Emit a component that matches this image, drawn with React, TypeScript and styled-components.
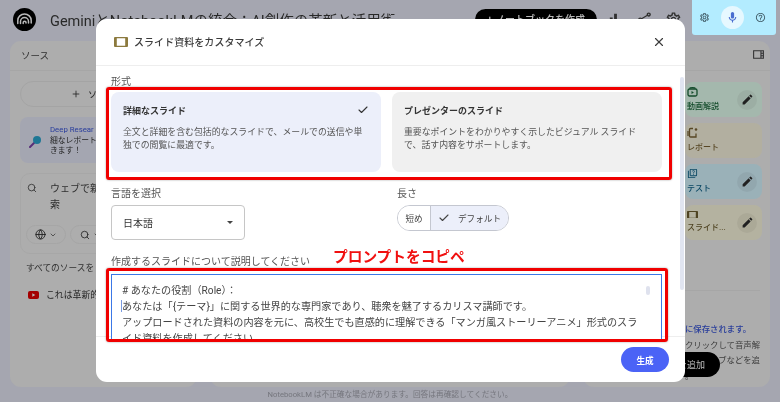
import styled, { createGlobalStyle } from 'styled-components'
import { Check, ChevronDown, Globe, Plus, Search, X } from 'lucide-react'
import {
  MdEdit,
  MdOutlineHelpOutline,
  MdOutlineMic,
  MdOutlineQuiz,
  MdOutlineSettings,
  MdOutlineViewSidebar,
  MdOutlineShare,
  MdOutlineBarChart,
} from 'react-icons/md'

const Global = createGlobalStyle`
  html, body {
    margin: 0;
    padding: 0;
    background: #e5e7f4;
    font-family: Roboto, "Noto Sans CJK JP", sans-serif;
  }
`

const Page = styled.div`
  position: relative;
  width: 780px;
  height: 402px;
  overflow: hidden;
  background: #e5e7f4;
  color: #333;
  filter: blur(0.45px);
`

const TopBar = styled.header`
  height: 41px;
  display: flex;
  align-items: center;
  padding: 0 10px 2px 13px;
  box-sizing: border-box;
`

const DocTitle = styled.div`
  margin-left: 14px;
  font-size: 14.5px;
  color: #3a3a3a;
  white-space: nowrap;
  flex: 1;
`

const BlackPill = styled.div`
  width: 122px;
  height: 21px;
  border-radius: 11px;
  background: #000;
  color: #fff;
  font-size: 10px;
  font-weight: 500;
  line-height: 22px;
  text-align: center;
`

const TopIcons = styled.div`
  display: flex;
  align-items: center;
  gap: 12px;
  margin-left: 10px;
  margin-right: 88px;
  color: #444;
  font-size: 17px;
`

const Columns = styled.main`
  height: 346px;
  padding: 0 10px;
  display: grid;
  grid-template-columns: 187px 360px 187px;
  column-gap: 13px;
`

const Panel = styled.section`
  background: #f0f0f0;
  border-radius: 11px;
  overflow: hidden;
`

const PanelHead = styled.div<{ $right?: boolean }>`
  height: 30px;
  box-sizing: border-box;
  border-bottom: 1px solid #e6e6e6;
  display: flex;
  align-items: center;
  justify-content: ${p => (p.$right ? 'flex-end' : 'flex-start')};
  padding: 0 ${p => (p.$right ? '5px' : '11px')} 2px;
  font-size: 9.5px;
  color: #444;
`

const LeftBody = styled.div`
  padding: 10px 10px;
  display: flex;
  flex-direction: column;
`

const AddButton = styled.div`
  height: 26px;
  box-sizing: border-box;
  border: 1px solid #e4e4e4;
  border-radius: 13px;
  display: flex;
  align-items: center;
  padding-left: 50px;
  gap: 7px;
  font-size: 9px;
  color: #333;
`

const ResearchCard = styled.div`
  margin-top: 10px;
  height: 46px;
  border-radius: 8px;
  background: #e4e7f6;
  display: flex;
  align-items: center;
  padding: 2px 0 0 9px;
  box-sizing: border-box;
  gap: 8px;
  font-size: 7.8px;
  line-height: 10.5px;
  color: #333;
  white-space: nowrap;
`

const ResearchLink = styled.span`
  color: #3a55d8;
`

const SearchBox = styled.div`
  margin-top: 10px;
  height: 81px;
  box-sizing: border-box;
  border: 1px solid #e8e8e8;
  border-radius: 10px;
  padding: 7px 5px;
`

const SearchRow = styled.div`
  display: flex;
  gap: 13px;
  padding-left: 1px;
  font-size: 10px;
  line-height: 16px;
  color: #444;
  margin-bottom: 12px;
`

const ChipRow = styled.div`
  display: flex;
  gap: 4px;
`

const Chip = styled.div`
  height: 19px;
  width: 40px;
  box-sizing: border-box;
  border: 1px solid #e6e6e6;
  border-radius: 10px;
  display: flex;
  align-items: center;
  justify-content: center;
  gap: 3px;
  color: #333;
`

const SourcesLabel = styled.div`
  margin: 8px 0 0 6px;
  font-size: 8.7px;
  line-height: 12px;
  color: #444;
  white-space: nowrap;
`

const SourceRow = styled.div`
  margin: 14px 0 0 8px;
  display: flex;
  align-items: center;
  gap: 7px;
  font-size: 8.9px;
  color: #333;
  white-space: nowrap;
`

const StudioBody = styled.div`
  padding: 11px 8px 0 102px;
  display: flex;
  flex-direction: column;
  gap: 6px;
`

const StudioCard = styled.div<{ $bg: string; $fg: string }>`
  height: 35px;
  border-radius: 8px;
  background: ${p => p.$bg};
  color: ${p => p.$fg};
  display: flex;
  align-items: center;
  justify-content: space-between;
  padding: 0 5px 0 2px;
  font-size: 8px;
  line-height: 12px;
  font-weight: 500;
`

const StudioInfo = styled.div`
  display: flex;
  flex-direction: column;
  gap: 4px;
`

const EditCircle = styled.div`
  width: 20px;
  height: 20px;
  border-radius: 50%;
  background: rgba(0, 0, 0, 0.05);
  color: #2f2f2f;
  display: flex;
  align-items: center;
  justify-content: center;
`

const StudioNote = styled.div`
  margin: 50px 10px 0 0;
  border-top: 1px solid #e6e6e6;
  padding: 31px 0 0 102px;
  font-size: 8.4px;
  line-height: 15.5px;
  color: #555;
  white-space: nowrap;
`

const NoteLine = styled.div<{ $right?: boolean }>`
  text-align: ${p => (p.$right ? 'right' : 'left')};
`

const NoteLink = styled.div`
  color: #3653d6;
  font-weight: 500;
`

const AddPill = styled.div`
  position: absolute;
  left: 660px;
  top: 352px;
  width: 60px;
  height: 25px;
  border-radius: 13px;
  background: #000;
  color: #fff;
  font-size: 9px;
  display: flex;
  align-items: center;
  justify-content: flex-end;
  padding-right: 15px;
  box-sizing: border-box;
`

const Disclaimer = styled.footer`
  height: 15px;
  text-align: center;
  font-size: 7.7px;
  line-height: 15px;
  color: #a3a4af;
`

const Scrim = styled.div`
  position: absolute;
  inset: 0;
  background: rgba(0, 0, 0, 0.28);
`

const VoiceWidget = styled.div`
  position: absolute;
  left: 692px;
  top: 0;
  width: 84px;
  height: 35px;
  border-radius: 0 0 3px 3px;
  background: #b3ecff;
  display: flex;
  align-items: center;
  justify-content: space-between;
  padding: 0 10px 0 7px;
  box-sizing: border-box;
  color: #44606c;
  font-size: 11px;
`

const MicButton = styled.div`
  width: 23px;
  height: 23px;
  border-radius: 50%;
  background: #e6f8ff;
  color: #4a6ed0;
  display: flex;
  align-items: center;
  justify-content: center;
  font-size: 13px;
`

const Modal = styled.div`
  position: absolute;
  left: 96px;
  top: 19px;
  width: 589px;
  height: 363px;
  background: #fff;
  border-radius: 11px;
  display: flex;
  flex-direction: column;
`

const ModalHead = styled.div`
  height: 47px;
  box-sizing: border-box;
  flex: none;
  border-bottom: 1px solid #eeeeee;
  display: flex;
  align-items: center;
  padding: 0 19px 1px 18px;
  font-size: 10px;
  font-weight: 500;
  color: #3c3c3c;
`

const ModalTitle = styled.div`
  margin-left: 6px;
  flex: 1;
  letter-spacing: 0.05px;
`

const CloseButton = styled.div`
  display: flex;
  color: #3c3c3c;
`

const ModalBody = styled.div`
  height: 270px;
  flex: none;
  box-sizing: border-box;
  padding: 9px 23px 0 15px;
`

const FieldLabel = styled.div`
  position: relative;
  height: 12px;
  font-size: 10px;
  line-height: 14px;
  color: #555;
  white-space: nowrap;
`

const FormatRow = styled.div`
  position: relative;
  margin-top: 5px;
  display: grid;
  grid-template-columns: 270px 270px;
  column-gap: 11px;
`

const FormatCard = styled.div<{ $selected?: boolean }>`
  height: 80px;
  box-sizing: border-box;
  border-radius: 8px;
  padding: 11px 12px;
  background: ${p => (p.$selected ? '#eceffa' : '#f0f0f0')};
`

const CardTitleRow = styled.div`
  display: flex;
  justify-content: space-between;
  align-items: center;
  height: 14px;
  font-size: 9px;
  font-weight: 700;
  color: #333;
`

const CardText = styled.div`
  margin-top: 9px;
  font-size: 8.9px;
  line-height: 13px;
  color: #555;
`

const OptionsRow = styled.div`
  margin-top: 15px;
  display: grid;
  grid-template-columns: 286px 1fr;
`

const SelectBox = styled.div`
  margin-top: 6px;
  width: 134px;
  height: 35px;
  box-sizing: border-box;
  border: 1px solid #c6c6c6;
  border-radius: 4px;
  display: flex;
  align-items: center;
  justify-content: space-between;
  padding: 0 11px;
  font-size: 10px;
  color: #333;
`

const SelectCaret = styled.div`
  width: 0;
  height: 0;
  border-left: 3px solid transparent;
  border-right: 3px solid transparent;
  border-top: 3px solid #444;
`

const Segmented = styled.div`
  margin-top: 6px;
  width: 112px;
  height: 26px;
  box-sizing: border-box;
  border: 1px solid #c4c7d0;
  border-radius: 13px;
  overflow: hidden;
  display: flex;
  font-size: 8.6px;
  color: #444;
`

const Segment = styled.div<{ $selected?: boolean }>`
  display: flex;
  align-items: center;
  justify-content: center;
  gap: 8px;
  flex: ${p => (p.$selected ? 1 : 'none')};
  width: ${p => (p.$selected ? 'auto' : '32px')};
  background: ${p => (p.$selected ? '#eceffa' : '#fff')};
  border-left: ${p => (p.$selected ? '1px solid #c4c7d0' : 'none')};
`

const PromptLabel = styled(FieldLabel)`
  margin-top: 15px;
`

const Callout = styled.div`
  position: absolute;
  left: 222px;
  top: -9px;
  font-size: 14.7px;
  line-height: 22px;
  font-weight: 700;
  color: #f01010;
  text-shadow: 0 0 1px #fff;
`

const PromptWrap = styled.div`
  position: relative;
  margin-top: 7px;
  width: 551px;
`

const PromptBox = styled.div`
  position: relative;
  height: 65px;
  box-sizing: border-box;
  border: 1px solid #3b78e7;
  border-bottom: none;
  background: #fff;
  overflow: hidden;
  padding: 8px 10px;
  font-size: 10.15px;
  line-height: 15.9px;
  color: #444;
  white-space: nowrap;
`

const TextCaret = styled.span`
  display: inline-block;
  width: 1px;
  height: 12px;
  margin: 0 0 -2px -1px;
  background: #7a9be0;
`

const InnerThumb = styled.div`
  position: absolute;
  right: 11px;
  top: 11px;
  width: 4px;
  height: 9px;
  border-radius: 2px;
  background: #dfe2ee;
`

const RedFrame = styled.div<{ $t: number; $r: number; $b: number; $l: number }>`
  position: absolute;
  top: ${p => p.$t}px;
  right: ${p => p.$r}px;
  bottom: ${p => p.$b}px;
  left: ${p => p.$l}px;
  border: 3px solid #f00000;
  border-radius: 3px;
  box-shadow: 0 0 2px rgba(0, 0, 0, 0.4);
  pointer-events: none;
`

const ModalScroll = styled.div`
  position: absolute;
  left: 584px;
  top: 58px;
  width: 4px;
  height: 213px;
  border-radius: 2px;
  background: #e1e5f1;
`

const ModalFoot = styled.div`
  height: 46px;
  flex: none;
  box-sizing: border-box;
  border-top: 1px solid #eeeeee;
  display: flex;
  justify-content: flex-end;
  padding: 10px 16px 0 0;
`

const GenerateButton = styled.div`
  width: 48px;
  height: 25px;
  border-radius: 13px;
  background: #4b63f6;
  color: #fff;
  font-size: 8.6px;
  font-weight: 700;
  display: flex;
  align-items: center;
  justify-content: center;
`

function Logo() {
  return (
    <svg width="23" height="23" viewBox="0 0 23 23">
      <circle cx="11.5" cy="11.5" r="11.5" fill="#000" />
      <g fill="none" stroke="#fff" strokeWidth="1.5" strokeLinecap="round">
        <path d="M4.8 15.5V12.5a6.7 6.5 0 0 1 13.4 0V15" />
        <path d="M7.5 15.5V13.5a4 4 0 0 1 8 0V15" />
        <path d="M10.2 15.5V14.6a1.4 1.4 0 0 1 2.8 0V15" />
      </g>
    </svg>
  )
}

function SlideIcon({ color, size = 14 }: { color: string; size?: number }) {
  return (
    <svg width={size} height={(size * 10) / 14} viewBox="0 0 14 10">
      <path
        d="M1 0h12a1 1 0 0 1 1 1v8a1 1 0 0 1-1 1H1a1 1 0 0 1-1-1V1a1 1 0 0 1 1-1zM2.8 1.3v7.4h8.4V1.3z"
        fill={color}
        fillRule="evenodd"
      />
    </svg>
  )
}

function Lens() {
  return (
    <svg width="13" height="13" viewBox="0 0 13 13">
      <path d="M1 12l4-4" stroke="#7a3fa8" strokeWidth="2" strokeLinecap="round" />
      <circle cx="8" cy="5" r="4" fill="#2aa5cf" />
    </svg>
  )
}

function YouTube() {
  return (
    <svg width="11" height="8" viewBox="0 0 11 8">
      <rect width="11" height="8" rx="2" fill="#e30000" />
      <path d="M4.3 2.2v3.6l3-1.8z" fill="#fff" />
    </svg>
  )
}

function VideoIcon() {
  return (
    <svg width="11" height="11" viewBox="0 0 11 11" fill="none" stroke="currentColor" strokeWidth="1.3">
      <rect x="1" y="3" width="9" height="7" rx="1.5" />
      <path d="M2.5 2.6C3 1.4 8 1.4 8.5 2.6" />
      <path d="M4.5 5v3l2.4-1.5z" fill="currentColor" stroke="none" />
    </svg>
  )
}

function ReportIcon() {
  return (
    <svg width="11" height="11" viewBox="0 0 11 11" fill="none" stroke="currentColor" strokeWidth="1.3">
      <path d="M6 1.5H3.5a1 1 0 0 0-1 1V9a1 1 0 0 0 1 1H9V6.5" />
      <path d="M1 4v5" />
      <circle cx="9" cy="2.5" r="1.3" fill="currentColor" stroke="none" />
    </svg>
  )
}

const studio = [
  { label: '動画解説', bg: '#e4fff0', fg: '#1c6a3c', icon: <VideoIcon />, edit: true },
  { label: 'レポート', bg: '#f7f3de', fg: '#7a6334', icon: <ReportIcon />, edit: false },
  { label: 'テスト', bg: '#d6f5ff', fg: '#11658c', icon: <MdOutlineQuiz size={11} />, edit: true },
  { label: 'スライド...', bg: '#faf7de', fg: '#6e5f30', icon: <SlideIcon color="#6e5f30" size={11} />, edit: true },
]

export default function App() {
  return (
    <Page>
      <Global />
      <TopBar>
        <Logo />
        <DocTitle>GeminiとNotebookLMの統合：AI創作の革新と活用術</DocTitle>
        <BlackPill>+ ノートブックを作成</BlackPill>
        <TopIcons>
          <MdOutlineBarChart />
          <MdOutlineShare />
          <MdOutlineSettings />
        </TopIcons>
      </TopBar>

      <Columns>
        <Panel>
          <PanelHead>ソース</PanelHead>
          <LeftBody>
            <AddButton>
              <Plus size={10} /> ソ
            </AddButton>
            <ResearchCard>
              <Lens />
              <div>
                <ResearchLink>Deep Resear</ResearchLink>
                <br />
                細なレポート
                <br />
                きます！
              </div>
            </ResearchCard>
            <SearchBox>
              <SearchRow>
                <Search size={10} style={{ marginTop: 2, flex: 'none' }} />
                <div>
                  ウェブで新
                  <br />
                  索
                </div>
              </SearchRow>
              <ChipRow>
                <Chip>
                  <Globe size={11} />
                  <ChevronDown size={8} />
                </Chip>
                <Chip>
                  <Search size={10} />
                  <ChevronDown size={8} />
                </Chip>
              </ChipRow>
            </SearchBox>
            <SourcesLabel>すべてのソースを</SourcesLabel>
            <SourceRow>
              <YouTube />
              これは革新的
            </SourceRow>
          </LeftBody>
        </Panel>
        <Panel />
        <Panel>
          <PanelHead $right>
            <MdOutlineViewSidebar size={13} color="#444" />
          </PanelHead>
          <StudioBody>
            {studio.map(item => (
              <StudioCard key={item.label} $bg={item.bg} $fg={item.fg}>
                <StudioInfo>
                  {item.icon}
                  <div>{item.label}</div>
                </StudioInfo>
                {item.edit && (
                  <EditCircle>
                    <MdEdit size={13} />
                  </EditCircle>
                )}
              </StudioCard>
            ))}
          </StudioBody>
          <StudioNote>
            <NoteLink>に保存されます。</NoteLink>
            <NoteLine $right>クリックして音声解</NoteLine>
            <NoteLine $right>ブなどを追</NoteLine>
            <NoteLine>。</NoteLine>
          </StudioNote>
        </Panel>
      </Columns>
      <AddPill>を追加</AddPill>
      <Disclaimer>NotebookLM は不正確な場合があります。回答は再確認してください。</Disclaimer>

      <Scrim />

      <VoiceWidget>
        <MdOutlineSettings />
        <MicButton>
          <MdOutlineMic />
        </MicButton>
        <MdOutlineHelpOutline />
      </VoiceWidget>

      <Modal>
        <ModalHead>
          <SlideIcon color="#8c7a3e" />
          <ModalTitle>スライド資料をカスタマイズ</ModalTitle>
          <CloseButton>
            <X size={14} />
          </CloseButton>
        </ModalHead>
        <ModalBody>
          <FieldLabel>形式</FieldLabel>
          <FormatRow>
            <FormatCard $selected>
              <CardTitleRow>
                詳細なスライド
                <Check size={12} strokeWidth={2.2} />
              </CardTitleRow>
              <CardText>
                全文と詳細を含む包括的なスライドで、メールでの送信や単
                <br />
                独での閲覧に最適です。
              </CardText>
            </FormatCard>
            <FormatCard>
              <CardTitleRow>プレゼンターのスライド</CardTitleRow>
              <CardText>
                重要なポイントをわかりやすく示したビジュアル スライド
                <br />
                で、話す内容をサポートします。
              </CardText>
            </FormatCard>
            <RedFrame $t={-5} $r={-10} $b={-8} $l={-5} />
          </FormatRow>
          <OptionsRow>
            <div>
              <FieldLabel>言語を選択</FieldLabel>
              <SelectBox>
                日本語
                <SelectCaret />
              </SelectBox>
            </div>
            <div>
              <FieldLabel>長さ</FieldLabel>
              <Segmented>
                <Segment>短め</Segment>
                <Segment $selected>
                  <Check size={12} strokeWidth={2.2} />
                  デフォルト
                </Segment>
              </Segmented>
            </div>
          </OptionsRow>
          <PromptLabel>
            作成するスライドについて説明してください
            <Callout>プロンプトをコピペ</Callout>
          </PromptLabel>
          <PromptWrap>
            <PromptBox>
              # あなたの役割（Role）：
              <br />
              <TextCaret />
              あなたは「{'{テーマ}'}」に関する世界的な専門家であり、聴衆を魅了するカリスマ講師です。
              <br />
              アップロードされた資料の内容を元に、高校生でも直感的に理解できる「マンガ風ストーリーアニメ」形式のスラ
              <br />
              イド資料を作成してください。
              <InnerThumb />
            </PromptBox>
            <RedFrame $t={-6} $r={-6} $b={-3} $l={-5} />
          </PromptWrap>
        </ModalBody>
        <ModalFoot>
          <GenerateButton>生成</GenerateButton>
        </ModalFoot>
        <ModalScroll />
      </Modal>
    </Page>
  )
}
